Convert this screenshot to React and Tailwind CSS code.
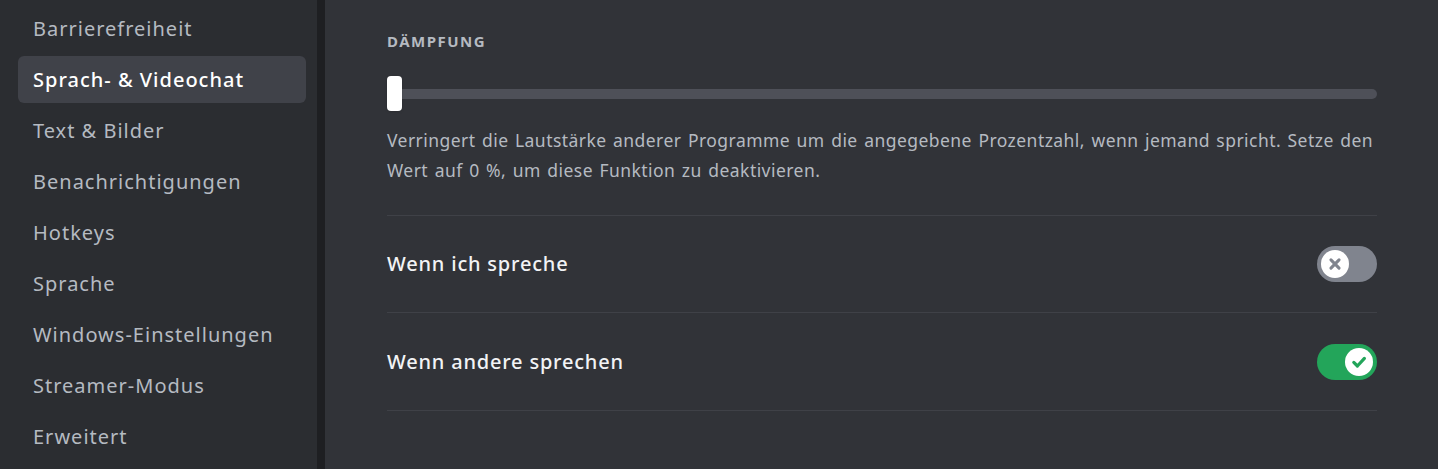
import React from "react";

const items = [
  "Barrierefreiheit",
  "Sprach- & Videochat",
  "Text & Bilder",
  "Benachrichtigungen",
  "Hotkeys",
  "Sprache",
  "Windows-Einstellungen",
  "Streamer-Modus",
  "Erweitert",
];

const Toggle = ({ on }) => (
  <div
    className={
      "flex h-[36px] w-[60px] items-center rounded-full px-[4px] " +
      (on ? "justify-end bg-[#23a55a]" : "justify-start bg-[#80848e]")
    }
  >
    <div className="flex h-[28px] w-[28px] items-center justify-center rounded-full bg-white">
      {on ? (
        <svg width="20" height="20" viewBox="0 0 20 20" fill="none">
          <path d="M4.8 10.4l3.6 3.6L15.4 6.4" stroke="#23a55a" strokeWidth="3.2" strokeLinecap="round" strokeLinejoin="round" />
        </svg>
      ) : (
        <svg width="18" height="18" viewBox="0 0 20 20" fill="none">
          <path d="M5.5 5.5l9 9M14.5 5.5l-9 9" stroke="#80848e" strokeWidth="3.4" strokeLinecap="round" />
        </svg>
      )}
    </div>
  </div>
);

export default function App() {
  return (
    <div className="flex h-[469px] w-[1438px] overflow-hidden bg-[#313338] font-['Noto_Sans',sans-serif]">
      {/* SIDEBAR */}
      <aside className="flex w-[317px] shrink-0 flex-col gap-1 bg-[#2b2d31] pl-[18px] pr-[11px] pt-[5px]">
        {items.map((label) => {
          const active = label === "Sprach- & Videochat";
          return (
            <div
              key={label}
              className={
                "flex h-[47px] shrink-0 items-center rounded-[6px] px-[15px] text-[20px] tracking-[1px] " +
                (active ? "bg-[#404249] font-medium text-white" : "text-[#b5bac1]")
              }
            >
              {label}
            </div>
          );
        })}
      </aside>
      <div className="w-[8px] shrink-0 bg-[#1e1f22]" />

      {/* CONTENT */}
      <main className="flex-1 pl-[62px] pr-[61px] pt-[31px]">
        <h2 className="text-[15px] font-bold uppercase leading-[20px] tracking-[0.1em] text-[#b5bac1]">Dämpfung</h2>

        <div className="relative mt-[25px] flex h-[36px] items-center">
          <div className="ml-[8px] h-[10px] flex-1 rounded-full bg-[#4e5058]" />
          <div className="absolute left-0 top-0 h-[35px] w-[15px] rounded-[4px] bg-white shadow" />
        </div>

        <div className="border-b border-[#3f4147] pb-[30px]">
          <p className="mt-[13px] text-[17.5px] leading-[30px] tracking-[0.45px] [word-spacing:1.5px] text-[#b5bac1]">
            Verringert die Lautstärke anderer Programme um die angegebene Prozentzahl, wenn jemand spricht. Setze den Wert auf 0 %, um diese Funktion zu deaktivieren.
          </p>
        </div>

        <div className="flex h-[97px] items-center justify-between border-b border-[#3f4147]">
          <span className="text-[20px] font-medium tracking-[0.8px] text-[#f2f3f5]">Wenn ich spreche</span>
          <Toggle on={false} />
        </div>
        <div className="flex h-[98px] items-center justify-between border-b border-[#3f4147]">
          <span className="text-[20px] font-medium tracking-[0.8px] text-[#f2f3f5]">Wenn andere sprechen</span>
          <Toggle on />
        </div>
      </main>
    </div>
  );
}
